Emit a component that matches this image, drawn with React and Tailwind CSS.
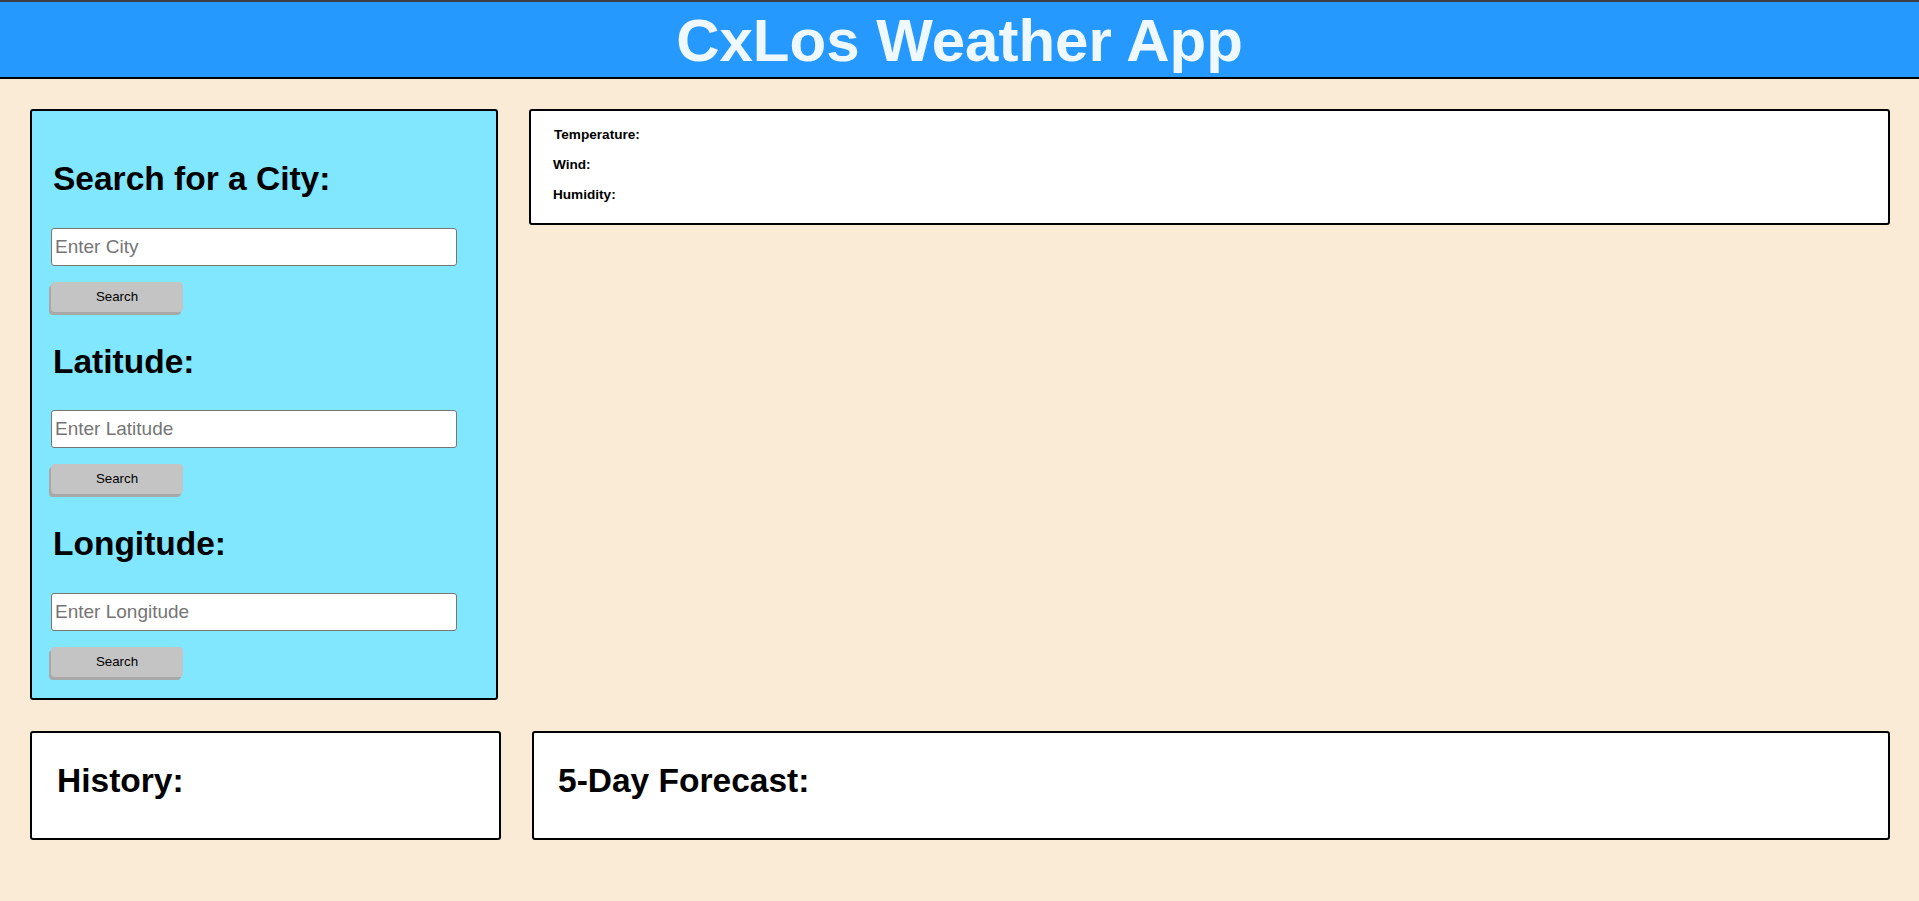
export default function App() {
  const sections = [
    { title: "Search for a City:", placeholder: "Enter City" },
    { title: "Latitude:", placeholder: "Enter Latitude" },
    { title: "Longitude:", placeholder: "Enter Longitude" },
  ];

  return (
    <div className="min-h-[901px] bg-[#faebd7] font-['Liberation_Sans',Arial,sans-serif] text-black">
      {/* Header */}
      <header className="border-t-2 border-b-2 border-t-[#3b3f44] border-b-black bg-[#2699ff] pt-[9px] pb-[6px]">
        <h1 className="text-center text-[60px] font-bold leading-none text-[#f0f8ff]">CxLos Weather App</h1>
      </header>

      <main className="pt-[30px] pl-[30px] pr-[29px]">
        <div className="flex items-start gap-[31px]">
          {/* Search panel */}
          <section className="w-[468px] shrink-0 rounded-[3px] border-2 border-black bg-[#80e7ff] pl-[19px] pt-[51px] pb-[21px]">
            {sections.map((s, idx) => (
              <div key={idx} className={idx > 0 ? "mt-[33px]" : ""}>
                <h2 className="ml-[2px] text-[33.5px] font-bold leading-none">{s.title}</h2>
                <input
                  type="text"
                  placeholder={s.placeholder}
                  className="mt-[32px] block h-[38px] w-[406px] rounded-[3px] border border-[#767676] bg-white pl-[3px] text-[19px] outline-none placeholder:text-[#757575]"
                />
                <button className="mt-[16px] block h-[30px] w-[132px] rounded-[4px] bg-[#c4c4c4] text-[13.33px] text-black shadow-[-2px_3px_0_#a8a8a8]">
                  Search
                </button>
              </div>
            ))}
          </section>

          {/* Current weather */}
          <section className="flex flex-1 flex-col gap-[15px] rounded-[3px] border-2 border-black bg-white pl-[22px] pt-[16px] pb-[21px]">
            <h5 className="ml-[1px] text-[13.6px] font-bold leading-[15px]">Temperature:</h5>
            <h5 className="text-[13.6px] font-bold leading-[15px]">Wind:</h5>
            <h5 className="text-[13.6px] font-bold leading-[15px]">Humidity:</h5>
          </section>
        </div>

        <div className="mt-[31px] flex gap-[31px]">
          <section className="w-[471px] shrink-0 rounded-[3px] border-2 border-black bg-white pl-[25px] pt-[31px] pb-[41px]">
            <h2 className="text-[33.5px] font-bold leading-none">History:</h2>
          </section>
          <section className="flex-1 rounded-[3px] border-2 border-black bg-white pl-[24px] pt-[31px] pb-[41px]">
            <h2 className="text-[33.5px] font-bold leading-none">5-Day Forecast:</h2>
          </section>
        </div>
      </main>
    </div>
  );
}
